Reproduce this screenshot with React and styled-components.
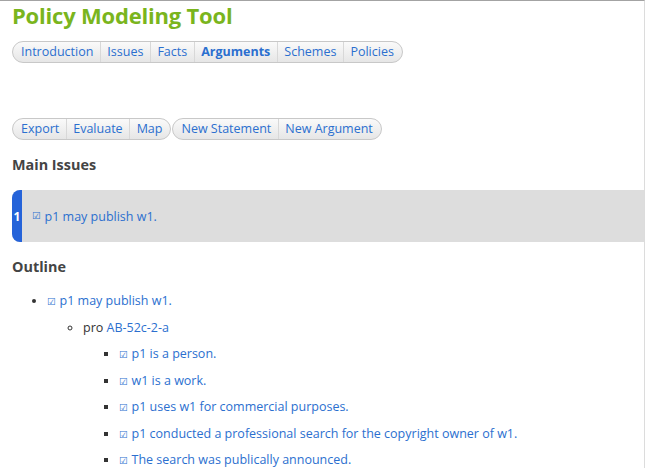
import React from 'react';
import styled, { createGlobalStyle } from 'styled-components';

const GlobalStyle = createGlobalStyle`
  html, body {
    margin: 0;
    padding: 0;
    background: #fff;
  }
  body {
    font-family: "Open Sans", "DejaVu Sans", sans-serif;
    font-size: 12.5px;
    color: #333;
  }
`;

const navItems = ['Introduction', 'Issues', 'Facts', 'Arguments', 'Schemes', 'Policies'];

const premises = [
  'p1 is a person.',
  'w1 is a work.',
  'p1 uses w1 for commercial purposes.',
  'p1 conducted a professional search for the copyright owner of w1.',
  'The search was publically announced.',
];

const Check = () => <Box>☑</Box>;

const App = () => (
  <Page>
    <GlobalStyle />
    <Title>Policy Modeling Tool</Title>
    <ButtonBar>
      {navItems.map((item) => (
        <Segment key={item} $active={item === 'Arguments'}>{item}</Segment>
      ))}
    </ButtonBar>

    <Actions>
      <ButtonBar>
        <Segment>Export</Segment>
        <Segment>Evaluate</Segment>
        <Segment>Map</Segment>
      </ButtonBar>
      <ButtonBar>
        <Segment>New Statement</Segment>
        <Segment>New Argument</Segment>
      </ButtonBar>
    </Actions>

    <Heading>Main Issues</Heading>
    <Issue>
      <IssueNumber>1</IssueNumber>
      <IssueText><Check />p1 may publish w1.</IssueText>
    </Issue>

    <Heading>Outline</Heading>
    <Outline>
      <Item>
        <Link><Check />p1 may publish w1.</Link>
        <SubList>
          <Item>
            pro <Link>AB-52c-2-a</Link>
            <PremiseList>
              {premises.map((p) => (
                <Item key={p}><Link><Check />{p}</Link></Item>
              ))}
            </PremiseList>
          </Item>
        </SubList>
      </Item>
    </Outline>
  </Page>
);

const Page = styled.div`
  box-sizing: border-box;
  width: 645px;
  height: 468px;
  overflow: hidden;
  border-top: 1px solid #a3a3a3;
  border-right: 1px solid #dcdcdc;
  padding-left: 12px;
`;

const Title = styled.h1`
  margin: 0;
  padding-top: 1px;
  font-size: 22px;
  line-height: 26px;
  font-weight: 700;
  color: #7ab51d;
  letter-spacing: -0.2px;
`;

const ButtonBar = styled.div`
  display: inline-flex;
  height: 22px;
  box-sizing: border-box;
  border: 1px solid #c8c8c8;
  border-radius: 11px;
  background: linear-gradient(#fafafa, #e6e6e6);
  overflow: hidden;
  margin-top: 13px;
`;

const Segment = styled.span`
  display: flex;
  align-items: center;
  padding: 0 6.5px;
  font-size: 12.5px;
  line-height: 20px;
  color: #2b6fcf;
  font-weight: ${(p) => (p.$active ? 700 : 400)};
  border-left: 1px solid #d8d8d8;
  &:first-child {
    border-left: none;
    padding-left: 8px;
  }
  &:last-child {
    padding-right: 8px;
  }
`;

const Actions = styled.div`
  display: flex;
  gap: 1px;
  margin-top: 42px;
`;

const Heading = styled.h2`
  margin: 15px 0 0;
  font-size: 14.4px;
  line-height: 20px;
  font-weight: 700;
  color: #444;
`;

const Issue = styled.div`
  display: flex;
  align-items: stretch;
  height: 52px;
  margin-top: 15px;
  background: #dddddd;
  border-radius: 8px 0 0 8px;
  overflow: hidden;
`;

const IssueNumber = styled.div`
  width: 10px;
  display: flex;
  align-items: center;
  justify-content: center;
  background: #2563d9;
  color: #fff;
  font-weight: 700;
  font-size: 12px;
`;

const IssueText = styled.div`
  display: flex;
  align-items: center;
  padding-left: 10px;
  color: #2b6fcf;
  font-size: 12.5px;
`;

const Box = styled.span`
  font-family: "DejaVu Sans", sans-serif;
  font-size: 9.5px;
  line-height: 1;
  margin-right: 4px;
`;

const Link = styled.span`
  color: #2b6fcf;
`;

const Outline = styled.ul`
  margin: 11px 0 0;
  padding-left: 35px;
  list-style: disc;
`;

const Item = styled.li`
  line-height: 26.5px;
  color: #333;
`;

const SubList = styled.ul`
  margin: 0;
  padding-left: 36px;
  list-style: circle;
`;

const PremiseList = styled.ul`
  margin: 0;
  padding-left: 36px;
  list-style: square;
`;

export default App;
